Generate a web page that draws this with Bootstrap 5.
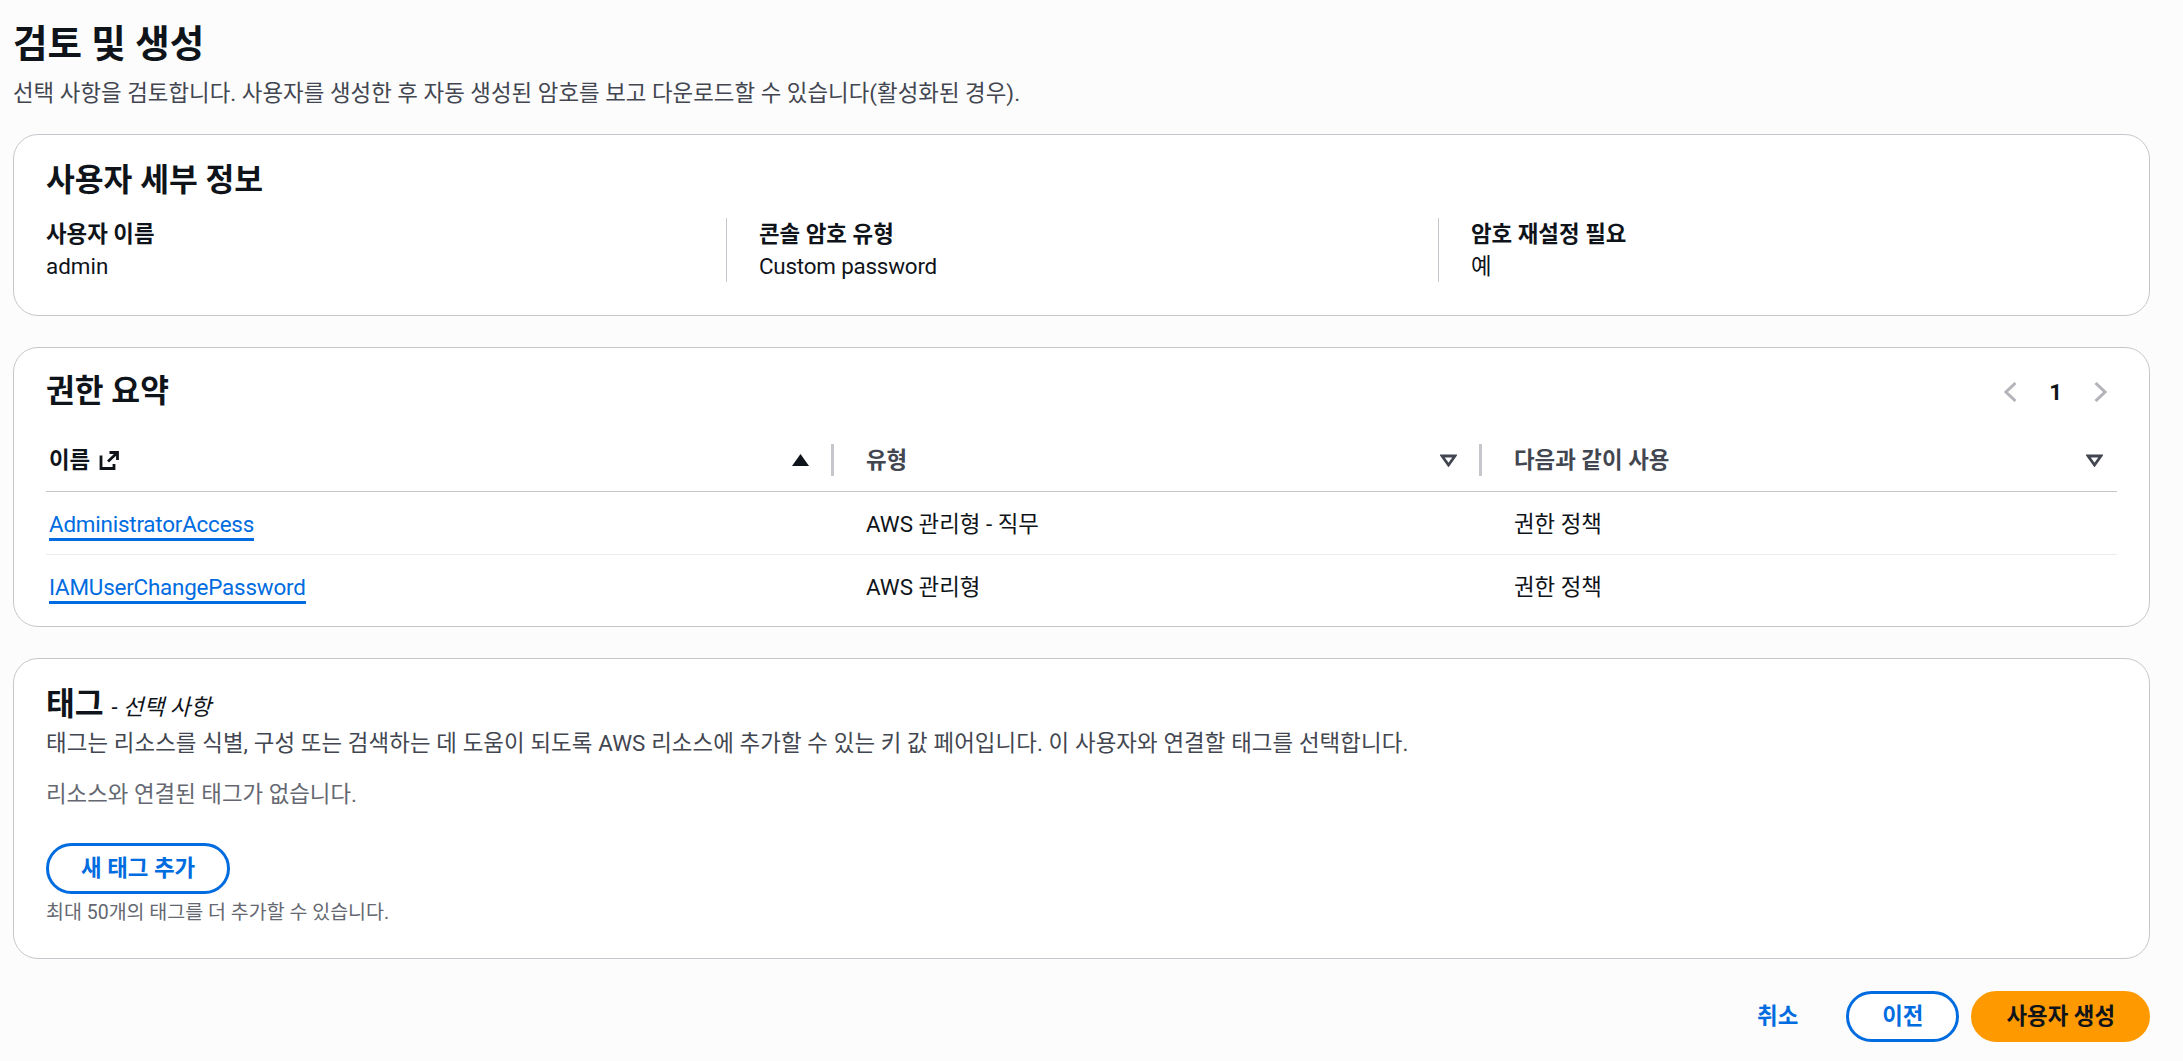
<!doctype html>
<html lang="ko"><head><meta charset="utf-8">
<title>검토 및 생성</title>
<link href="https://cdn.jsdelivr.net/npm/bootstrap@5.3.0/dist/css/bootstrap.min.css" rel="stylesheet">
<style>
html,body{height:100%}
body{background:#fcfcfc;color:#0f141a;font-family:Roboto,"Noto Sans CJK KR",sans-serif;font-size:22.4px;line-height:32px;overflow:hidden}
.page-wrap{padding:21.500px 33px 0 13px}
.page-title{font-size:37.500px;line-height:44px;font-weight:700;margin:0}
.page-sub{color:#424650;margin:11px 0 0;letter-spacing:.02px}
.panel.card{--bs-card-border-color:#c6c6cd;--bs-card-border-radius:25px;--bs-card-inner-border-radius:24px;border-width:1.6px;background:#fff;margin-top:31px;padding:0 32px;line-height:32px}
.page-sub + .panel.card{margin-top:25px}
.panel-title{font-size:31.300px;font-weight:700;line-height:40px;margin:0;color:#0f141a}
.title-a{margin-top:26px}
.title-b{margin-top:24px}
.title-c{margin-top:26.500px}
.info-grid{display:grid;grid-template-columns:680px 712px 1fr;margin:17.500px 0 32.500px}
.info-col{border-left:1.6px solid #c6c6cd;padding-left:32px;height:64px}
.info-col.first-col{border-left:0;padding-left:0}
.info-label{font-weight:700}
.latin-tight{letter-spacing:-.2px}
.pager-box{color:#0f141a;font-weight:700;gap:32px;margin-right:10px}
.perm-table{table-layout:fixed;width:100%;margin:18px 0 8px;--bs-table-bg:transparent;--bs-table-color:#0f141a}
.perm-table th{font-weight:700;color:#424650;height:62px;padding:0;border-bottom:1.6px solid #c6c6cd;vertical-align:middle}
.perm-table td{padding:2px 0 0 3px;height:63px;vertical-align:middle;border-bottom:1.6px solid #ebebf0}
.perm-table tr:last-child td{border-bottom:0}
.perm-table td.cell-gap{padding-left:32px}
.head-sep{border-right:3px solid #c6c6cd;height:32px;padding-right:32px;display:flex;align-items:center}
.head-cell{display:flex;align-items:center;justify-content:space-between;width:100%}
.head-cell.gap-left{padding-left:32px}
.head-cell.last-head{padding:0 14px 0 32px}
.head-name{display:flex;align-items:center;gap:9px;color:#0f141a;padding-left:3px}
.sort-ico{margin-right:-10px}
.perm-link{color:#006ce0;text-decoration:none;border-bottom:3px solid #006ce0;padding-bottom:1px;letter-spacing:-.2px}
.desc-text{color:#424650;margin-top:1.600px;letter-spacing:.1px}
.gray-text{color:#656871;margin-top:19px}
.small-note{font-size:19.500px;color:#656871;line-height:24px;margin:7.400px 0 33px}
.tag-opt{font-style:italic;font-size:22.4px;margin-left:8px}
.tag-title-inline{display:inline}
.btn.pill-outline,.btn.pill-orange,.btn.plain-link{border-width:3px;border-radius:28px;font-weight:700;font-size:22.4px;line-height:32px;padding:6.500px 32px}
.btn.pill-outline{--bs-btn-color:#006ce0;--bs-btn-border-color:#006ce0;--bs-btn-bg:#fff;--bs-btn-hover-color:#006ce0;--bs-btn-hover-bg:#f0fbff;--bs-btn-hover-border-color:#002a8f}
.btn.pill-orange{--bs-btn-color:#0f141a;--bs-btn-bg:#ff9900;--bs-btn-border-color:#ff9900;--bs-btn-hover-bg:#fa6f00;--bs-btn-hover-border-color:#fa6f00;--bs-btn-hover-color:#0f141a}
.btn.plain-link{--bs-btn-color:#006ce0;--bs-btn-bg:transparent;--bs-btn-border-color:transparent;padding-right:33px}
.foot-bar .pill-outline{padding-left:33px;padding-right:33px}
.foot-bar{margin-top:32px;gap:12px}
.btn-space{margin-top:33px}
</style></head>
<body>
<div class="page-wrap">
  <h1 class="page-title">검토 및 생성</h1>
  <p class="page-sub">선택 사항을 검토합니다. 사용자를 생성한 후 자동 생성된 암호를 보고 다운로드할 수 있습니다(활성화된 경우).</p>

  <section class="card panel">
    <h2 class="panel-title title-a">사용자 세부 정보</h2>
    <div class="info-grid">
      <div class="info-col first-col"><div class="info-label">사용자 이름</div><div>admin</div></div>
      <div class="info-col"><div class="info-label">콘솔 암호 유형</div><div class="latin-tight">Custom password</div></div>
      <div class="info-col"><div class="info-label">암호 재설정 필요</div><div>예</div></div>
    </div>
  </section>

  <section class="card panel">
    <div class="d-flex justify-content-between align-items-center title-b">
      <h2 class="panel-title">권한 요약</h2>
      <div class="d-flex align-items-center pager-box">
        <svg width="13" height="20" viewBox="0 0 13 20" fill="none" stroke="#b4b4bb" stroke-width="3"><path d="M11.500 1 2 10l9.500 9"/></svg>
        <span>1</span>
        <svg width="13" height="20" viewBox="0 0 13 20" fill="none" stroke="#b4b4bb" stroke-width="3"><path d="m1.500 1 9.500 9-9.500 9"/></svg>
      </div>
    </div>
    <table class="table perm-table">
      <colgroup><col style="width:788px"><col style="width:648px"><col></colgroup>
      <thead><tr>
        <th><div class="head-sep"><div class="head-cell"><span class="head-name">이름
          <svg width="21" height="21" viewBox="0 0 21 21" fill="none" stroke="#0f141a" stroke-width="2.800"><path d="M2 5.500v13h13V14M9 11.500 18.500 2.500M10.500 2.500h8V10"/></svg></span>
          <svg class="sort-ico" width="17" height="12" viewBox="0 0 17 12"><path d="M8.500 0 17 12H0z" fill="#0f141a"/></svg></div></div></th>
        <th><div class="head-sep"><div class="head-cell gap-left"><span>유형</span>
          <svg class="sort-ico" width="17" height="13" viewBox="0 0 17 13" fill="none" stroke="#424650" stroke-width="2.800"><path d="M2 2h13L8.500 11z"/></svg></div></div></th>
        <th><div class="head-cell last-head"><span>다음과 같이 사용</span>
          <svg width="17" height="13" viewBox="0 0 17 13" fill="none" stroke="#424650" stroke-width="2.800"><path d="M2 2h13L8.500 11z"/></svg></div></th>
      </tr></thead>
      <tbody>
        <tr><td><a class="perm-link" href="#">AdministratorAccess</a></td><td class="cell-gap">AWS 관리형 - 직무</td><td class="cell-gap">권한 정책</td></tr>
        <tr><td><a class="perm-link" href="#">IAMUserChangePassword</a></td><td class="cell-gap">AWS 관리형</td><td class="cell-gap">권한 정책</td></tr>
      </tbody>
    </table>
  </section>

  <section class="card panel">
    <div class="title-c"><h2 class="panel-title tag-title-inline">태그</h2><span class="tag-opt">- 선택 사항</span></div>
    <div class="desc-text">태그는 리소스를 식별, 구성 또는 검색하는 데 도움이 되도록 AWS 리소스에 추가할 수 있는 키 값 페어입니다. 이 사용자와 연결할 태그를 선택합니다.</div>
    <div class="gray-text">리소스와 연결된 태그가 없습니다.</div>
    <div class="btn-space"><button class="btn pill-outline" type="button">새 태그 추가</button></div>
    <div class="small-note">최대 50개의 태그를 더 추가할 수 있습니다.</div>
  </section>

  <div class="d-flex justify-content-end align-items-center foot-bar">
    <button class="btn plain-link" type="button">취소</button>
    <button class="btn pill-outline" type="button">이전</button>
    <button class="btn pill-orange" type="button">사용자 생성</button>
  </div>
</div>
</body></html>
